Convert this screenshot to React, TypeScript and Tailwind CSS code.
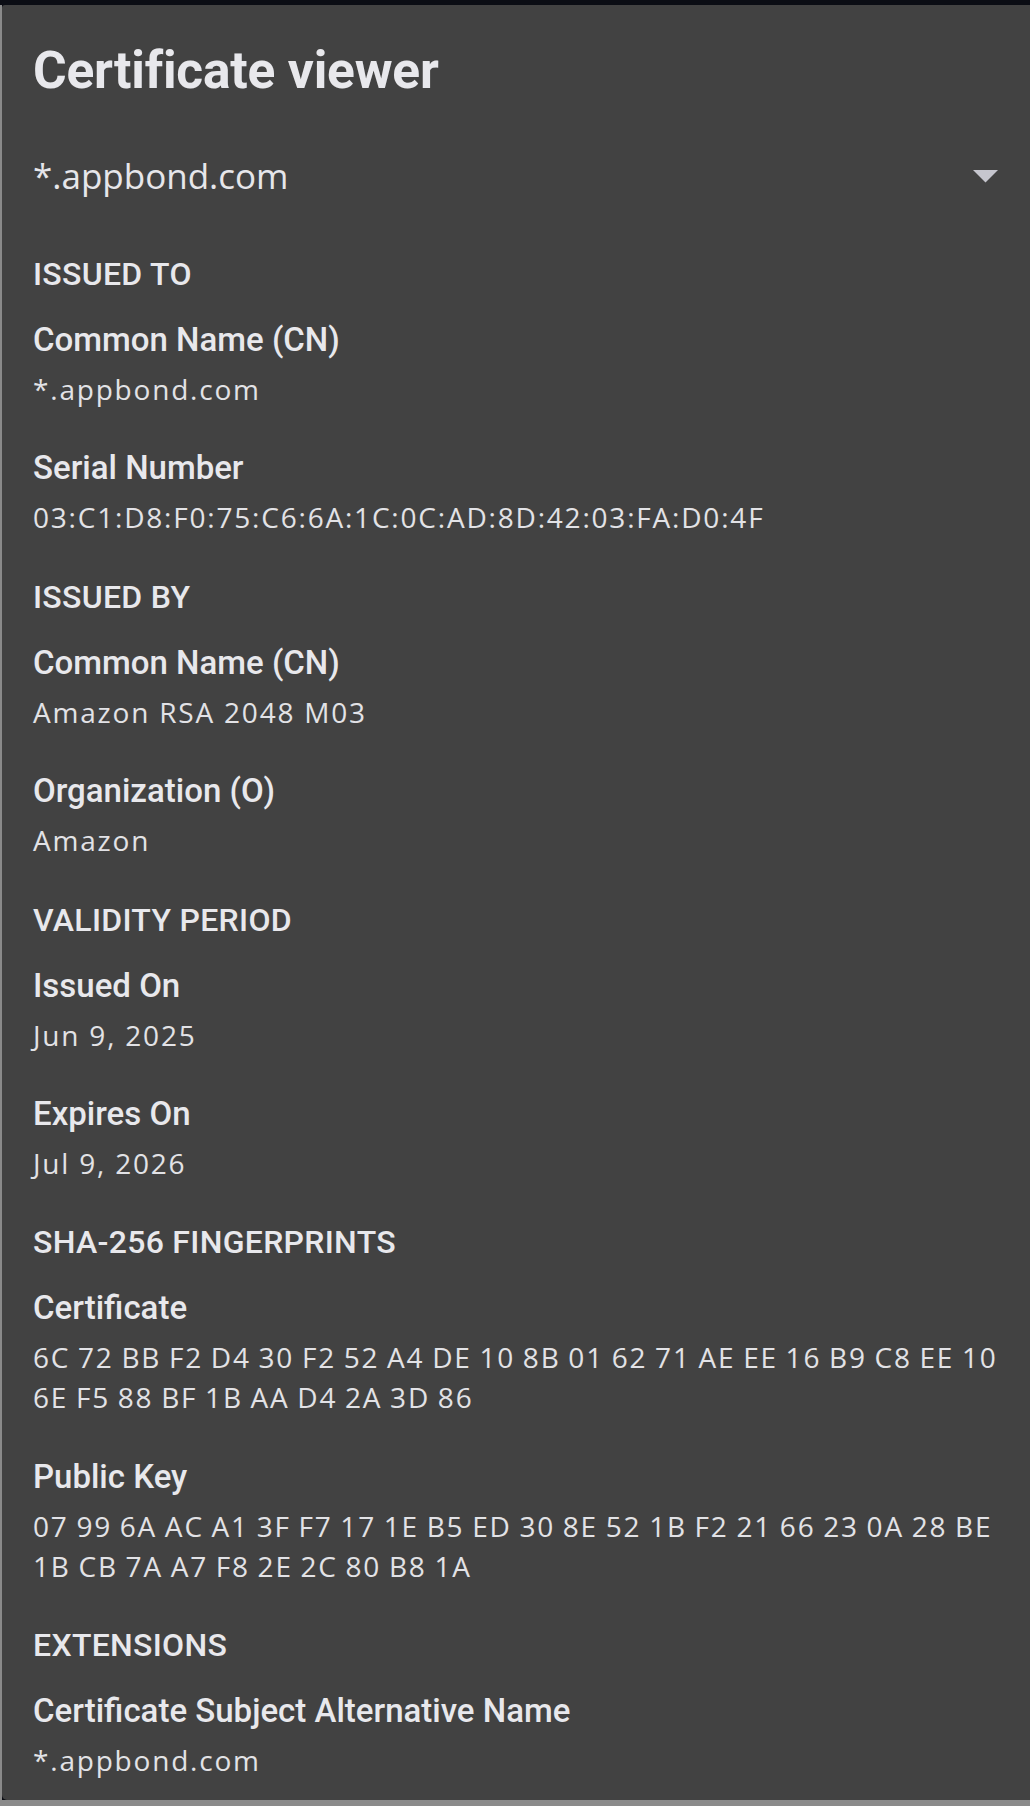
import React from "react";

type Field = { label: string; lines: string[]; hex?: boolean };
type Section = { title: string; fields: Field[] };

const sections: Section[] = [
  {
    title: "ISSUED TO",
    fields: [
      { label: "Common Name (CN)", lines: ["*.appbond.com"] },
      { label: "Serial Number", lines: ["03:C1:D8:F0:75:C6:6A:1C:0C:AD:8D:42:03:FA:D0:4F"] },
    ],
  },
  {
    title: "ISSUED BY",
    fields: [
      { label: "Common Name (CN)", lines: ["Amazon RSA 2048 M03"] },
      { label: "Organization (O)", lines: ["Amazon"] },
    ],
  },
  {
    title: "VALIDITY PERIOD",
    fields: [
      { label: "Issued On", lines: ["Jun 9, 2025"] },
      { label: "Expires On", lines: ["Jul 9, 2026"] },
    ],
  },
  {
    title: "SHA-256 FINGERPRINTS",
    fields: [
      {
        label: "Certificate",
        hex: true,
        lines: [
          "6C 72 BB F2 D4 30 F2 52 A4 DE 10 8B 01 62 71 AE EE 16 B9 C8 EE 10",
          "6E F5 88 BF 1B AA D4 2A 3D 86",
        ],
      },
      {
        label: "Public Key",
        hex: true,
        lines: [
          "07 99 6A AC A1 3F F7 17 1E B5 ED 30 8E 52 1B F2 21 66 23 0A 28 BE",
          "1B CB 7A A7 F8 2E 2C 80 B8 1A",
        ],
      },
    ],
  },
  {
    title: "EXTENSIONS",
    fields: [{ label: "Certificate Subject Alternative Name", lines: ["*.appbond.com"] }],
  },
];

const bodyFont = { fontFamily: '"Open Sans", "Noto Sans", sans-serif' };
const headFont = { fontFamily: 'Roboto, "Noto Sans", sans-serif' };

export default function App() {
  return (
    <div className="w-[1030px] h-[1806px] bg-[#0b0d14] flex flex-col overflow-hidden">
      <div className="h-[5px] shrink-0" />
      <div className="flex flex-1 min-h-0">
        <div className="w-[2px] bg-[#8a8a8a] shrink-0" />
        <div className="flex-1 bg-[#424242] rounded-bl-[5px] rounded-tl-[3px] pl-[31px] pr-[34px] pt-[36px] flex flex-col">
          <h1
            className="text-[51.5px] leading-[60px] font-bold text-[#e8e8ec] tracking-[-0.2px]"
            style={headFont}
          >
            Certificate viewer
          </h1>
          <div className="mt-[53px] flex items-center justify-between h-[44px]">
            <span className="text-[35px] leading-[44px] text-[#e6e6ea]" style={bodyFont}>
              *.appbond.com
            </span>
            <svg width="25" height="13" viewBox="0 0 25 13">
              <path d="M0 0 H25 L12.5 12.5 Z" fill="#c6c6ce" />
            </svg>
          </div>
          <div className="mt-[56px] flex flex-col gap-[39.4px]">
            {sections.map((s) => (
              <div key={s.title} className="flex flex-col">
                <div
                  className="text-[32px] leading-[40px] font-medium text-[#e8e8ec] tracking-[0.3px]"
                  style={headFont}
                >
                  {s.title}
                </div>
                <div className="mt-[26px] flex flex-col gap-[39.4px]">
                  {s.fields.map((f) => (
                    <div key={f.label} className="flex flex-col">
                      <div
                        className="text-[33px] leading-[40px] font-medium text-[#e8e8ec]"
                        style={headFont}
                      >
                        {f.label}
                      </div>
                      <div className="mt-[9px] flex flex-col">
                        {f.lines.map((l) => (
                          <div
                            key={l}
                            className={
                              f.hex
                                ? "text-[28px] leading-[40px] text-[#e2e2e6] whitespace-nowrap tracking-[1.8px] [word-spacing:-1.3px]"
                                : "text-[28px] leading-[40px] text-[#e2e2e6] whitespace-nowrap tracking-[1.8px]"
                            }
                            style={bodyFont}
                          >
                            {l}
                          </div>
                        ))}
                      </div>
                    </div>
                  ))}
                </div>
              </div>
            ))}
          </div>
        </div>
      </div>
      <div className="h-[6px] bg-[#8b8b8b] shrink-0" />
    </div>
  );
}
